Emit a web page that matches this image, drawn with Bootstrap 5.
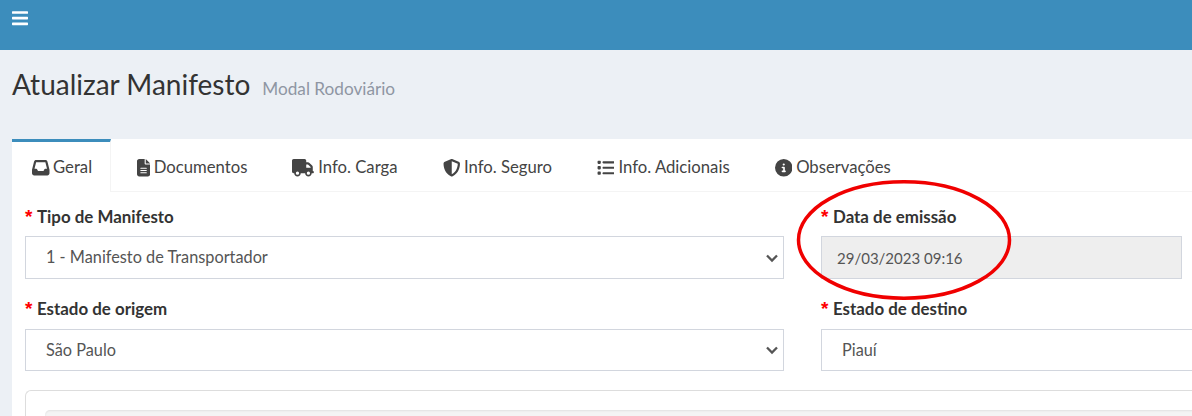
<!DOCTYPE html>
<html lang="pt-BR">
<head>
<meta charset="utf-8">
<title>Atualizar Manifesto</title>
<link href="https://cdn.jsdelivr.net/npm/bootstrap@5.3.0/dist/css/bootstrap.min.css" rel="stylesheet">
<style>
html,body{height:416px;overflow:hidden}
body{background:#ecf0f5;color:#333;font-family:"Lato","Noto Sans",sans-serif;font-size:16px;position:relative}
.topbar{height:50px;background:#3c8dbc;padding:9px 12px}
.topbar svg{display:block;width:16px;height:18.3px;fill:#fff}
.canvas-wrap{width:1600px;padding:0 12px}
.page-head{height:89px;padding-top:15px;display:flex;align-items:baseline;gap:12px}
.page-head h1{font-size:28px;font-weight:400;margin:0;line-height:38px;color:#333}
.page-head span{font-size:17.2px;color:#8f96a3}
.tab-box{background:#fff;height:300px}
.tab-list{display:flex;height:53px;border-bottom:1px solid #f4f4f4;margin:0;padding:0;list-style:none;font-size:16.7px}
.tab-list a{display:flex;align-items:center;gap:4px;height:53px;padding:2px 22.5px 0;color:#444;text-decoration:none;border-top:3px solid transparent;white-space:nowrap}
.tab-list a.on{border-top-color:#3c8dbc;background:#fff;border-right:1px solid #f4f4f4;padding:2px 18px 0 20px;gap:3.500px;margin-right:3px}
.tab-list svg{height:17.500px;width:auto;fill:#444;display:block}
.tab-body{padding:12px 13px 0}
.form-cols{display:grid;grid-template-columns:759px 759px;column-gap:37px}
.fld{margin-bottom:17px}
.fld label{display:flex;font-weight:700;font-size:16.9px;line-height:25px;margin-bottom:7px;color:#333}
.fld label i{color:#f00;font-style:normal;font-family:"Liberation Sans",sans-serif;font-size:19px;width:12px;flex:none}
.fld .form-select,.fld .form-control{height:43px;border-radius:0;border:1px solid #d2d6de;color:#555;font-size:16.3px;padding:0 20px;background-color:#fff;box-shadow:none}
.fld .form-control[disabled]{background:#eee;width:361px;padding:0 15px;font-size:15px}
.fld .form-select{background-image:url("data:image/svg+xml,%3csvg xmlns='http://www.w3.org/2000/svg' viewBox='0 0 16 12'%3e%3cpath fill='none' stroke='%23555' stroke-width='2.3' d='M3 3.500l5 5 5-5'/%3e%3c/svg%3e");background-size:16px 12px;background-position:right 3px center}
.form-cols .fld:nth-child(n+3){margin-bottom:19px}
.form-cols .fld:nth-child(n+3) label{margin-bottom:8px}
.form-cols .fld:nth-child(n+3) .form-select{height:42px}
.sub-panel{height:60px;border:1px solid #ddd;border-radius:6px 0 0 0;padding:19px;border-right:0}
.sub-panel div{height:60px;background:#f4f4f4;border-radius:5px;box-shadow:inset 0 1px 2px rgba(0,0,0,.08)}
.mark-ring{position:absolute;left:795px;top:179px;width:218px;height:122px;pointer-events:none}
</style>
</head>
<body>
<header class="topbar"><svg viewBox="0 0 448 512"><path d="M16 132h416c8.837 0 16-7.163 16-16V76c0-8.837-7.163-16-16-16H16C7.163 60 0 67.163 0 76v40c0 8.837 7.163 16 16 16zm0 160h416c8.837 0 16-7.163 16-16v-40c0-8.837-7.163-16-16-16H16c-8.837 0-16 7.163-16 16v40c0 8.837 7.163 16 16 16zm0 160h416c8.837 0 16-7.163 16-16v-40c0-8.837-7.163-16-16-16H16c-8.837 0-16 7.163-16 16v40c0 8.837 7.163 16 16 16z"/></svg></header>
<div class="canvas-wrap">
  <div class="page-head"><h1>Atualizar Manifesto</h1><span>Modal Rodoviário</span></div>
  <section class="tab-box">
    <ul class="tab-list">
      <li><a class="on" href="#"><svg viewBox="0 0 512 512"><path d="M121 32C91.600 32 66 52 58.900 80.500L1.900 308.400C.6 313.500 0 318.700 0 323.900V416c0 35.300 28.700 64 64 64H448c35.300 0 64-28.700 64-64V323.900c0-5.200-.6-10.400-1.900-15.500l-57-227.900C446 52 420.400 32 391 32H121zm0 64H391l48 192H387.800c-12.100 0-23.200 6.800-28.600 17.700l-14.300 28.600c-5.400 10.800-16.500 17.700-28.600 17.700H195.800c-12.100 0-23.200-6.800-28.600-17.700l-14.300-28.600c-5.400-10.800-16.500-17.700-28.600-17.700H73L121 96z"/></svg>Geral</a></li>
      <li><a href="#"><svg viewBox="0 0 384 512"><path d="M64 0C28.700 0 0 28.700 0 64V448c0 35.300 28.700 64 64 64H320c35.300 0 64-28.700 64-64V160H256c-17.700 0-32-14.300-32-32V0H64zM256 0V128H384L256 0zM112 256H272c8.800 0 16 7.200 16 16s-7.200 16-16 16H112c-8.800 0-16-7.200-16-16s7.200-16 16-16zm0 64H272c8.800 0 16 7.200 16 16s-7.200 16-16 16H112c-8.800 0-16-7.200-16-16s7.200-16 16-16zm0 64H272c8.800 0 16 7.200 16 16s-7.200 16-16 16H112c-8.800 0-16-7.200-16-16s7.200-16 16-16z"/></svg>Documentos</a></li>
      <li><a href="#"><svg viewBox="0 0 640 512"><path d="M48 0C21.500 0 0 21.500 0 48V368c0 26.500 21.500 48 48 48H64c0 53 43 96 96 96s96-43 96-96H384c0 53 43 96 96 96s96-43 96-96h32c17.700 0 32-14.300 32-32s-14.300-32-32-32V288 256 237.300c0-17-6.700-33.300-18.700-45.300L512 114.700c-12-12-28.300-18.700-45.300-18.700H416V48c0-26.500-21.500-48-48-48H48zM416 160h50.700L544 237.300V256H416V160zM112 416a48 48 0 1 1 96 0 48 48 0 1 1 -96 0zm368-48a48 48 0 1 1 0 96 48 48 0 1 1 0-96z"/></svg>Info. Carga</a></li>
      <li><a href="#"><svg viewBox="0 0 512 512"><path d="M256 0c4.600 0 9.200 1 13.400 2.900L457.700 82.800c22 9.300 38.400 31 38.300 57.200c-.5 99.200-41.300 280.700-213.600 363.200c-16.700 8-36.100 8-52.800 0C57.300 420.700 16.500 239.200 16 140c-.1-26.200 16.300-47.900 38.300-57.200L242.700 2.900C246.800 1 251.400 0 256 0zm0 66.800V444.800C394 378 431.100 230.100 432 141.400L256 66.800l0 0z"/></svg>Info. Seguro</a></li>
      <li><a href="#"><svg viewBox="0 0 512 512"><path d="M40 48C26.700 48 16 58.700 16 72v48c0 13.300 10.700 24 24 24H88c13.300 0 24-10.700 24-24V72c0-13.300-10.700-24-24-24H40zM192 64c-17.700 0-32 14.300-32 32s14.300 32 32 32H480c17.700 0 32-14.300 32-32s-14.300-32-32-32H192zm0 160c-17.700 0-32 14.300-32 32s14.300 32 32 32H480c17.700 0 32-14.300 32-32s-14.300-32-32-32H192zm0 160c-17.700 0-32 14.300-32 32s14.300 32 32 32H480c17.700 0 32-14.300 32-32s-14.300-32-32-32H192zM16 232v48c0 13.300 10.700 24 24 24H88c13.300 0 24-10.700 24-24V232c0-13.300-10.700-24-24-24H40c-13.300 0-24 10.700-24 24zM40 368c-13.300 0-24 10.700-24 24v48c0 13.300 10.700 24 24 24H88c13.300 0 24-10.700 24-24V392c0-13.300-10.700-24-24-24H40z"/></svg>Info. Adicionais</a></li>
      <li><a href="#"><svg viewBox="0 0 512 512"><path d="M256 512A256 256 0 1 0 256 0a256 256 0 1 0 0 512zM216 336h24V272H216c-13.300 0-24-10.700-24-24s10.700-24 24-24h48c13.300 0 24 10.700 24 24v88h8c13.300 0 24 10.700 24 24s-10.700 24-24 24H216c-13.300 0-24-10.700-24-24s10.700-24 24-24zm40-208a32 32 0 1 1 0 64 32 32 0 1 1 0-64z"/></svg>Observações</a></li>
    </ul>
    <div class="tab-body">
      <div class="form-cols">
        <div class="fld"><label><i>*</i>Tipo de Manifesto</label><select class="form-select"><option>1 - Manifesto de Transportador</option></select></div>
        <div class="fld"><label><i>*</i>Data de emissão</label><input class="form-control" disabled value="29/03/2023 09:16"></div>
        <div class="fld"><label><i>*</i>Estado de origem</label><select class="form-select"><option>São Paulo</option></select></div>
        <div class="fld"><label><i>*</i>Estado de destino</label><select class="form-select"><option>Piauí</option></select></div>
      </div>
      <div class="sub-panel"><div></div></div>
    </div>
  </section>
</div>
<svg class="mark-ring" viewBox="0 0 218 122"><ellipse cx="109" cy="61" rx="105.500" ry="58.200" fill="none" stroke="#f00000" stroke-width="3.500"/></svg>
</body>
</html>
